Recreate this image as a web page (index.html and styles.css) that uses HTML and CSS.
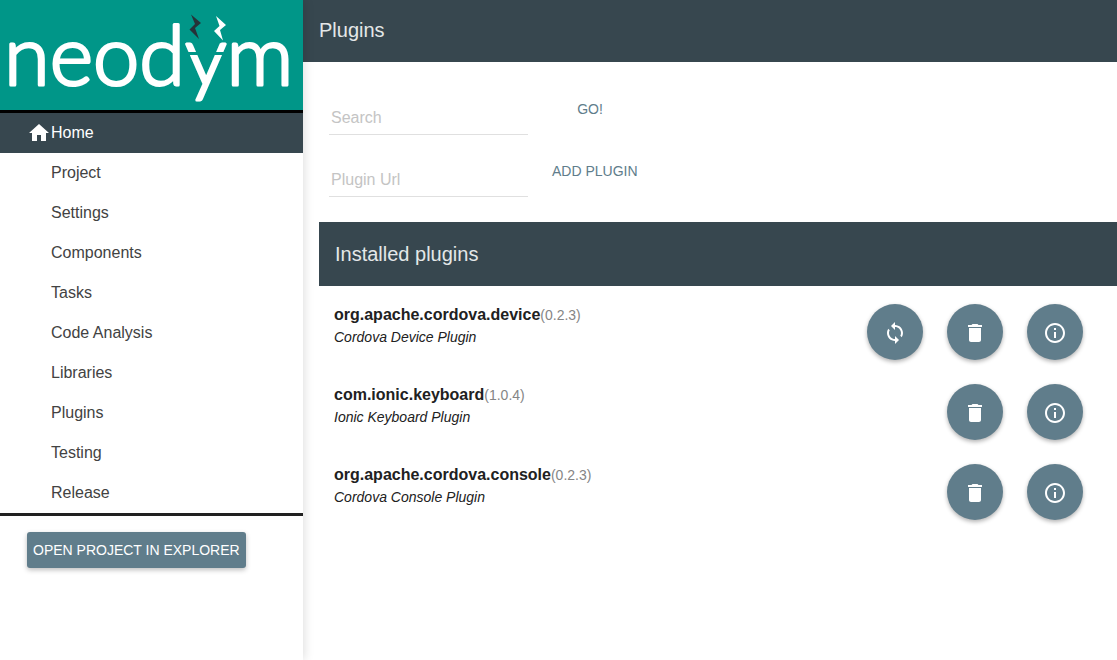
FILE: index.html
```html
<!DOCTYPE html>
<html lang="en">
<head>
<meta charset="utf-8">
<title>Neodym - Plugins</title>
<link rel="stylesheet" href="styles.css">
</head>
<body>
<svg class="sprite" aria-hidden="true">
  <symbol id="sync" viewBox="0 0 24 24"><path d="M12 4V1L8 5l4 4V6c3.310 0 6 2.690 6 6 0 1.010-.25 1.970-.7 2.800l1.460 1.460A7.930 7.930 0 0 0 20 12c0-4.420-3.580-8-8-8zm0 14c-3.310 0-6-2.690-6-6 0-1.010.25-1.970.7-2.800L5.240 7.740A7.930 7.930 0 0 0 4 12c0 4.420 3.580 8 8 8v3l4-4-4-4v3z"/></symbol>
  <symbol id="trash" viewBox="0 0 24 24"><path d="M6 19c0 1.100.9 2 2 2h8c1.100 0 2-.9 2-2V7H6v12zM19 4h-3.500l-1-1h-5l-1 1H5v2h14V4z"/></symbol>
  <symbol id="info" viewBox="0 0 24 24"><path d="M11 17h2v-6h-2v6zm1-15C6.480 2 2 6.480 2 12s4.480 10 10 10 10-4.480 10-10S17.520 2 12 2zm0 18c-4.410 0-8-3.590-8-8s3.590-8 8-8 8 3.590 8 8-3.590 8-8 8zM11 9h2V7h-2v2z"/></symbol>
</svg>
<div class="app">
  <aside class="sidebar">
    <svg class="logo" viewBox="0 0 303 110" role="img" aria-label="neodym">
      <text class="logo-text" x="4" y="85">neodym</text>
      <path class="logo-gap" d="M184 52h44v3h-44z"/>
      <path class="bolt-dark" d="M191 14.500 201 23 195 28 199 39 189.500 29.500 195 24z"/>
      <path class="bolt-light" d="M216 16 226 25 220 30 223 40.500 214 31 219.500 26z"/>
    </svg>
    <nav class="menu">
      <a class="menu-item active" href="#"><svg class="home" viewBox="0 0 24 24" aria-hidden="true"><path d="M10 20v-6h4v6h5v-8h3L12 3 2 12h3v8z"/></svg>Home</a>
      <a class="menu-item" href="#">Project</a>
      <a class="menu-item" href="#">Settings</a>
      <a class="menu-item" href="#">Components</a>
      <a class="menu-item" href="#">Tasks</a>
      <a class="menu-item" href="#">Code Analysis</a>
      <a class="menu-item" href="#">Libraries</a>
      <a class="menu-item" href="#">Plugins</a>
      <a class="menu-item" href="#">Testing</a>
      <a class="menu-item" href="#">Release</a>
    </nav>
    <button class="button raised" type="button">OPEN PROJECT IN EXPLORER</button>
  </aside>
  <main class="main">
    <header class="toolbar"><h1 class="title">Plugins</h1></header>
    <div class="content">
      <div class="forms">
        <form class="form-row">
          <input class="field" type="text" placeholder="Search" aria-label="Search">
          <button class="button flat" type="button">GO!</button>
        </form>
        <form class="form-row">
          <input class="field" type="text" placeholder="Plugin Url" aria-label="Plugin Url">
          <button class="button flat" type="button">ADD PLUGIN</button>
        </form>
      </div>
      <section>
        <header class="band"><h2 class="title">Installed plugins</h2></header>
        <ul class="plugins">
          <li class="plugin">
            <div class="details">
              <h3 class="name">org.apache.cordova.device<span class="version">(0.2.3)</span></h3>
              <p class="description">Cordova Device Plugin</p>
            </div>
            <div class="actions">
              <button class="fab" type="button" aria-label="Update"><svg><use href="#sync"/></svg></button>
              <button class="fab" type="button" aria-label="Remove"><svg><use href="#trash"/></svg></button>
              <button class="fab" type="button" aria-label="Info"><svg><use href="#info"/></svg></button>
            </div>
          </li>
          <li class="plugin">
            <div class="details">
              <h3 class="name">com.ionic.keyboard<span class="version">(1.0.4)</span></h3>
              <p class="description">Ionic Keyboard Plugin</p>
            </div>
            <div class="actions">
              <button class="fab" type="button" aria-label="Remove"><svg><use href="#trash"/></svg></button>
              <button class="fab" type="button" aria-label="Info"><svg><use href="#info"/></svg></button>
            </div>
          </li>
          <li class="plugin">
            <div class="details">
              <h3 class="name">org.apache.cordova.console<span class="version">(0.2.3)</span></h3>
              <p class="description">Cordova Console Plugin</p>
            </div>
            <div class="actions">
              <button class="fab" type="button" aria-label="Remove"><svg><use href="#trash"/></svg></button>
              <button class="fab" type="button" aria-label="Info"><svg><use href="#info"/></svg></button>
            </div>
          </li>
        </ul>
      </section>
    </div>
  </main>
</div>
</body>
</html>
```
FILE: styles.css
```css
* { box-sizing: border-box; }

body {
  margin: 0;
  background: #fff;
  color: #212121;
  font-family: "Liberation Sans", Arial, sans-serif;
  font-size: 16px;
}

h1, h2, h3, p, ul { margin: 0; padding: 0; }

.sprite { display: none; }

.app { display: flex; min-height: 100vh; }

.sidebar {
  position: relative;
  flex: 0 0 303px;
  background: #fff;
  box-shadow: 1px 0 10px rgba(0, 0, 0, 0.14);
}

.logo { display: block; width: 100%; background: #009688; }
.logo-text {
  fill: #fff;
  stroke: #fff;
  stroke-width: 3;
  stroke-linejoin: round;
  font-family: Lato, sans-serif;
  font-size: 83px;
  font-weight: 300;
}
.logo-gap { fill: #009688; }
.bolt-dark { fill: #263238; }
.bolt-light { fill: #fff; }

.menu {
  border-top: 3px solid #000;
  border-bottom: 3px solid #212121;
}
.menu-item {
  display: flex;
  align-items: center;
  height: 40px;
  padding-left: 51px;
  color: #424242;
  text-decoration: none;
}
.menu-item.active {
  padding-left: 27px;
  background: #37474f;
  color: #fff;
}
.home { width: 24px; height: 24px; fill: #fff; }

.button {
  height: 36px;
  min-width: 88px;
  padding: 0 6px;
  border: 0;
  border-radius: 3px;
  background: transparent;
  color: #607d8b;
  font: 14px "Liberation Sans", Arial, sans-serif;
  white-space: nowrap;
}
.raised {
  margin: 16px 27px;
  background: #607d8b;
  color: #fff;
  box-shadow: 0 2px 5px rgba(0, 0, 0, 0.26);
}

.main { flex: 1; min-width: 0; }
.toolbar {
  display: flex;
  align-items: center;
  height: 62px;
  padding: 0 16px 2px;
  background: #37474f;
}
.title { color: #e4e7e8; font-size: 20px; font-weight: 400; }

.content { padding-left: 16px; }
.forms {
  display: grid;
  gap: 18px;
  padding: 29px 10px 25px;
}
.form-row { display: flex; gap: 18px; height: 44px; }
.field {
  width: 199px;
  height: 44px;
  padding: 10px 2px 0;
  border: 0;
  border-bottom: 1px solid #e0e0e0;
  background: transparent;
  font: 16px "Liberation Sans", Arial, sans-serif;
}
.field::placeholder { color: #c4c4c4; opacity: 1; }

.band {
  display: flex;
  align-items: center;
  height: 64px;
  padding: 0 16px;
  background: #37474f;
}

.plugins { padding: 6px 34px 6px 15px; list-style: none; }
.plugin {
  display: flex;
  align-items: center;
  justify-content: space-between;
  height: 80px;
}
.details { display: grid; gap: 2px; padding-bottom: 12px; }
.name { font-size: 16px; font-weight: 700; line-height: 20px; }
.version { color: #858585; font-size: 14px; font-weight: 400; }
.description { font-size: 14px; font-style: italic; line-height: 20px; }

.actions { display: flex; gap: 24px; }
.fab {
  display: grid;
  place-items: center;
  width: 56px;
  height: 56px;
  padding: 2px 0 0;
  border: 0;
  border-radius: 50%;
  background: #607d8b;
  box-shadow: 0 2px 4px rgba(0, 0, 0, 0.3);
}
.fab svg { width: 24px; height: 24px; fill: #fff; }
```
